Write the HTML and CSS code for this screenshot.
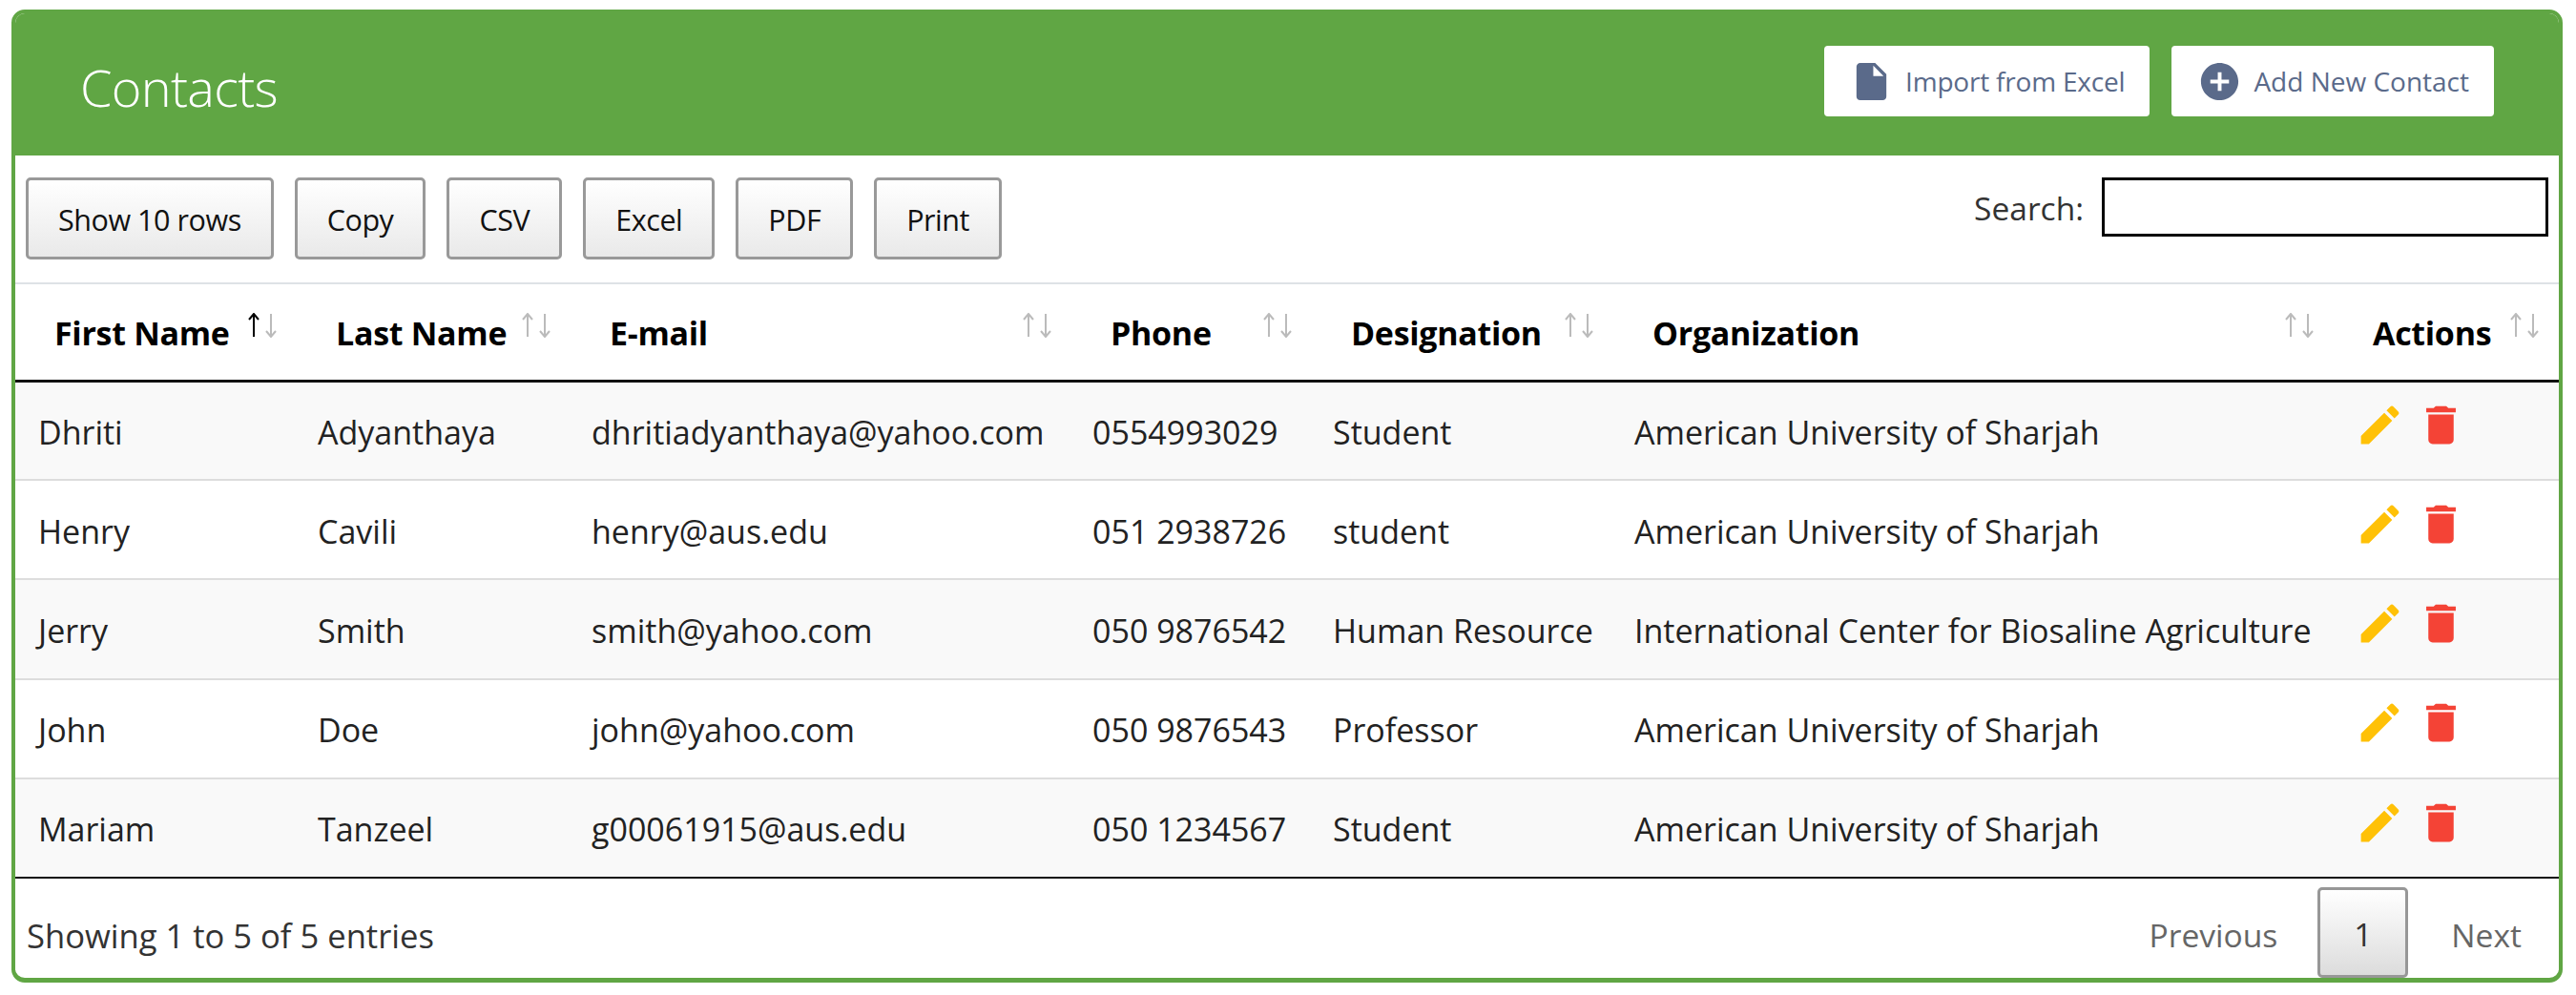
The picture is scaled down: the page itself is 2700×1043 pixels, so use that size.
FILE: index.html
```html
<!DOCTYPE html>
<html lang="en">
<head>
  <meta charset="UTF-8" />
  <title>Contacts</title>
  <link rel="stylesheet" href="styles.css">
</head>
<body>
  <div class="contacts-card">
    <div class="card-header">
      <h1>Contacts</h1>
      <div class="header-actions">
        <a class="header-btn import-btn" href="#">
          <svg viewBox="0 0 24 24"><path d="M6 2c-1.1 0-1.99.9-1.99 2L4 20c0 1.1.89 2 1.99 2H18c1.1 0 2-.9 2-2V8l-6-6H6zm7 7V3.5L18.5 9H13z"/></svg>
          Import from Excel
        </a>
        <a class="header-btn add-btn" href="#">
          <svg viewBox="0 0 24 24"><path d="M12 2C6.48 2 2 6.48 2 12s4.48 10 10 10 10-4.48 10-10S17.52 2 12 2zm5 11h-4v4h-2v-4H7v-2h4V7h2v4h4v2z"/></svg>
          Add New Contact
        </a>
      </div>
    </div>

    <div class="toolbar">
      <div class="export-buttons">
        <button class="grey-btn">Show 10 rows</button>
        <button class="grey-btn">Copy</button>
        <button class="grey-btn">CSV</button>
        <button class="grey-btn">Excel</button>
        <button class="grey-btn">PDF</button>
        <button class="grey-btn">Print</button>
      </div>
      <label class="search-box">Search: <input type="text" /></label>
    </div>

    <table class="contacts-table">
      <colgroup>
        <col class="col-first"><col class="col-last"><col class="col-email"><col class="col-phone"><col class="col-desig"><col class="col-org"><col class="col-actions">
      </colgroup>
      <thead>
        <tr>
          <th class="sorted">First Name<svg class="sort-icon" viewBox="0 0 30 26"><path class="up" d="M6 25V1M1 7l5-6 5 6"/><path class="down" d="M24 1v24M19 19l5 6 5-6"/></svg></th>
          <th>Last Name<svg class="sort-icon" viewBox="0 0 30 26"><path class="up" d="M6 25V1M1 7l5-6 5 6"/><path class="down" d="M24 1v24M19 19l5 6 5-6"/></svg></th>
          <th>E-mail<svg class="sort-icon" viewBox="0 0 30 26"><path class="up" d="M6 25V1M1 7l5-6 5 6"/><path class="down" d="M24 1v24M19 19l5 6 5-6"/></svg></th>
          <th>Phone<svg class="sort-icon" viewBox="0 0 30 26"><path class="up" d="M6 25V1M1 7l5-6 5 6"/><path class="down" d="M24 1v24M19 19l5 6 5-6"/></svg></th>
          <th>Designation<svg class="sort-icon" viewBox="0 0 30 26"><path class="up" d="M6 25V1M1 7l5-6 5 6"/><path class="down" d="M24 1v24M19 19l5 6 5-6"/></svg></th>
          <th>Organization<svg class="sort-icon" viewBox="0 0 30 26"><path class="up" d="M6 25V1M1 7l5-6 5 6"/><path class="down" d="M24 1v24M19 19l5 6 5-6"/></svg></th>
          <th>Actions<svg class="sort-icon" viewBox="0 0 30 26"><path class="up" d="M6 25V1M1 7l5-6 5 6"/><path class="down" d="M24 1v24M19 19l5 6 5-6"/></svg></th>
        </tr>
      </thead>
      <tbody>
        <tr>
          <td>Dhriti</td><td>Adyanthaya</td><td>dhritiadyanthaya@yahoo.com</td><td>0554993029</td><td>Student</td><td>American University of Sharjah</td>
          <td class="actions"><svg class="edit" viewBox="0 0 24 24"><path d="M3 17.25V21h3.75L17.81 9.94l-3.75-3.75L3 17.25zM20.71 7.04c.39-.39.39-1.02 0-1.41l-2.34-2.34c-.39-.39-1.02-.39-1.41 0l-1.83 1.83 3.75 3.75 1.83-1.83z"/></svg><svg class="delete" viewBox="0 0 24 24"><path d="M6 19c0 1.1.9 2 2 2h8c1.1 0 2-.9 2-2V7H6v12zM19 4h-3.5l-1-1h-5l-1 1H5v2h14V4z"/></svg></td>
        </tr>
        <tr>
          <td>Henry</td><td>Cavili</td><td>henry@aus.edu</td><td>051 2938726</td><td>student</td><td>American University of Sharjah</td>
          <td class="actions"><svg class="edit" viewBox="0 0 24 24"><path d="M3 17.25V21h3.75L17.81 9.94l-3.75-3.75L3 17.25zM20.71 7.04c.39-.39.39-1.02 0-1.41l-2.34-2.34c-.39-.39-1.02-.39-1.41 0l-1.83 1.83 3.75 3.75 1.83-1.83z"/></svg><svg class="delete" viewBox="0 0 24 24"><path d="M6 19c0 1.1.9 2 2 2h8c1.1 0 2-.9 2-2V7H6v12zM19 4h-3.5l-1-1h-5l-1 1H5v2h14V4z"/></svg></td>
        </tr>
        <tr>
          <td>Jerry</td><td>Smith</td><td>smith@yahoo.com</td><td>050 9876542</td><td>Human Resource</td><td>International Center for Biosaline Agriculture</td>
          <td class="actions"><svg class="edit" viewBox="0 0 24 24"><path d="M3 17.25V21h3.75L17.81 9.94l-3.75-3.75L3 17.25zM20.71 7.04c.39-.39.39-1.02 0-1.41l-2.34-2.34c-.39-.39-1.02-.39-1.41 0l-1.83 1.83 3.75 3.75 1.83-1.83z"/></svg><svg class="delete" viewBox="0 0 24 24"><path d="M6 19c0 1.1.9 2 2 2h8c1.1 0 2-.9 2-2V7H6v12zM19 4h-3.5l-1-1h-5l-1 1H5v2h14V4z"/></svg></td>
        </tr>
        <tr>
          <td>John</td><td>Doe</td><td>john@yahoo.com</td><td>050 9876543</td><td>Professor</td><td>American University of Sharjah</td>
          <td class="actions"><svg class="edit" viewBox="0 0 24 24"><path d="M3 17.25V21h3.75L17.81 9.94l-3.75-3.75L3 17.25zM20.71 7.04c.39-.39.39-1.02 0-1.41l-2.34-2.34c-.39-.39-1.02-.39-1.41 0l-1.83 1.83 3.75 3.75 1.83-1.83z"/></svg><svg class="delete" viewBox="0 0 24 24"><path d="M6 19c0 1.1.9 2 2 2h8c1.1 0 2-.9 2-2V7H6v12zM19 4h-3.5l-1-1h-5l-1 1H5v2h14V4z"/></svg></td>
        </tr>
        <tr>
          <td>Mariam</td><td>Tanzeel</td><td>g00061915@aus.edu</td><td>050 1234567</td><td>Student</td><td>American University of Sharjah</td>
          <td class="actions"><svg class="edit" viewBox="0 0 24 24"><path d="M3 17.25V21h3.75L17.81 9.94l-3.75-3.75L3 17.25zM20.71 7.04c.39-.39.39-1.02 0-1.41l-2.34-2.34c-.39-.39-1.02-.39-1.41 0l-1.83 1.83 3.75 3.75 1.83-1.83z"/></svg><svg class="delete" viewBox="0 0 24 24"><path d="M6 19c0 1.1.9 2 2 2h8c1.1 0 2-.9 2-2V7H6v12zM19 4h-3.5l-1-1h-5l-1 1H5v2h14V4z"/></svg></td>
        </tr>
      </tbody>
    </table>

    <div class="table-footer">
      <div class="entries-info">Showing 1 to 5 of 5 entries</div>
      <div class="pagination">
        <a class="page-link" href="#">Previous</a>
        <a class="page-current" href="#">1</a>
        <a class="page-link" href="#">Next</a>
      </div>
    </div>
  </div>
</body>
</html>
```

FILE: styles.css
```css
* {
  box-sizing: border-box;
}

body {
  margin: 0;
  padding: 10px 14px 13px 12px;
  background: #fff;
  color: #212529;
  font-family: "Open Sans", sans-serif;
  font-size: 34px;
}

.contacts-card {
  height: 1020px;
  border: 4px solid #60A644;
  border-bottom-width: 5px;
  border-radius: 14px;
  overflow: hidden;
}

/* green header */
.card-header {
  height: 149px;
  background: #60A644;
  display: flex;
  justify-content: space-between;
  align-items: flex-start;
  padding: 34px 68px 0;
}

.card-header h1 {
  margin: 0;
  padding-top: 6px;
  font-size: 54px;
  font-weight: 300;
  color: #fff;
  letter-spacing: -0.7px;
}

.header-actions {
  display: flex;
  gap: 23px;
}

.header-btn {
  height: 74px;
  padding: 0 26px;
  display: flex;
  align-items: center;
  gap: 12px;
  background: #fff;
  border-radius: 4px;
  color: #5A6A8A;
  font-size: 28px;
  text-decoration: none;
}

.import-btn {
  letter-spacing: -0.2px;
}

.add-btn {
  padding-left: 27px;
}

.header-btn svg {
  width: 47px;
  height: 47px;
  fill: #5A6A8A;
}

/* buttons + search */
.toolbar {
  height: 133px;
  display: flex;
  justify-content: space-between;
  align-items: flex-start;
  padding: 23px 11px 0;
}

.export-buttons {
  display: flex;
  gap: 22px;
}

.grey-btn {
  height: 86px;
  padding: 1px 31px 0;
  border: 3px solid #999;
  border-radius: 5px;
  background: linear-gradient(to bottom, #fff, #e9e9e9);
  color: #111;
  font-family: inherit;
  font-size: 30.5px;
  letter-spacing: -0.45px;
}

.search-box {
  display: flex;
  align-items: flex-start;
  gap: 19px;
  color: #333;
  font-size: 33.5px;
  line-height: 65px;
}

.search-box input {
  width: 468px;
  height: 62px;
  border: 3px solid #000;
  background: #fff;
}

/* table */
.contacts-table {
  width: 100%;
  table-layout: fixed;
  border-collapse: collapse;
  border-top: 2px solid #dee2e6;
}

.col-first { width: 295px; }
.col-last { width: 287px; }
.col-email { width: 525px; }
.col-phone { width: 252px; }
.col-desig { width: 316px; }
.col-org { width: 755px; }
.col-actions { width: 236px; }

.contacts-table th {
  position: relative;
  height: 102px;
  padding: 3px 0 0 41px;
  border-bottom: 3px solid #111;
  text-align: left;
  color: #000;
  font-size: 34px;
  font-weight: 700;
  letter-spacing: -0.3px;
}

.sort-icon {
  position: absolute;
  top: 30px;
  right: 21px;
  width: 30px;
  height: 26px;
  fill: none;
  stroke-width: 2;
}

.sort-icon .up,
.sort-icon .down {
  stroke: #bbb;
}

.sorted .sort-icon .up {
  stroke: #000;
}

.contacts-table td {
  height: 104.2px;
  padding: 3px 0 0 22px;
  border-bottom: 2px solid #ddd;
  color: #222;
  white-space: nowrap;
}

.contacts-table td:first-child {
  padding-left: 24px;
}

.contacts-table tbody tr:nth-child(odd) {
  background: #f9f9f9;
}

.contacts-table tbody tr:last-child td {
  border-bottom: 2px solid #111;
}

.contacts-table td.actions {
  padding: 0 0 12px 22px;
}

.actions svg {
  width: 53px;
  height: 53px;
  vertical-align: middle;
}

.actions .edit {
  fill: #FFC107;
  margin-right: 11px;
}

.actions .delete {
  fill: #F44336;
}

/* footer */
.table-footer {
  display: flex;
  justify-content: space-between;
  align-items: flex-start;
  padding: 9px 39px 0 12px;
}

.entries-info {
  padding-top: 27px;
  color: #333;
  font-size: 34.6px;
}

.pagination {
  display: flex;
  align-items: center;
  gap: 42px;
  font-size: 33.6px;
}

.page-link {
  padding-top: 5px;
  color: #666;
  text-decoration: none;
}

.page-current {
  width: 95px;
  height: 95px;
  margin-right: 3px;
  padding-top: 3px;
  display: flex;
  align-items: center;
  justify-content: center;
  border: 3px solid #979797;
  border-radius: 5px;
  background: linear-gradient(to bottom, #fff, #dcdcdc);
  color: #333;
  text-decoration: none;
}
```
